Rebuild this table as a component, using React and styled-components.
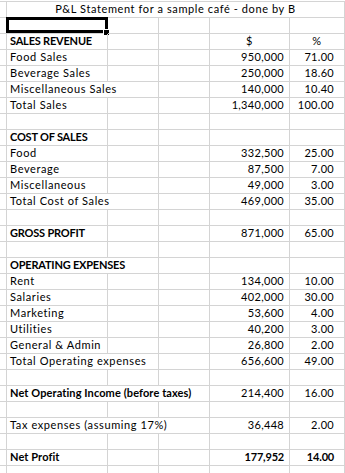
import React from "react";
import styled, { createGlobalStyle } from "styled-components";

const GlobalStyle = createGlobalStyle`
  html, body {
    margin: 0;
    padding: 0;
    background: #ffffff;
    overflow: hidden;
  }
  body {
    font-family: Lato, "Open Sans", sans-serif;
    color: #000000;
  }
`;

const Sheet = styled.div`
  width: 345px;
  margin-top: 1px;
  border-top: 1px solid #d4d4d4;
`;

const Row = styled.div`
  display: grid;
  grid-template-columns: 7px 101px 51px 51px 80px 55px;
  height: 16px;
`;

const Cell = styled.div`
  position: relative;
  grid-column: span ${(p) => p.$span || 1};
  box-sizing: border-box;
  border-right: 1px solid #d4d4d4;
  border-bottom: 1px solid #d4d4d4;
  display: flex;
  align-items: flex-end;
  justify-content: ${(p) =>
    p.$align === "right" ? "flex-end" : p.$align === "center" ? "center" : "flex-start"};
  padding: 0 ${(p) => p.$pr ?? 3}px 1px ${(p) => p.$pl ?? 3}px;
  font-size: 11px;
  line-height: 14px;
  letter-spacing: 0.6px;
  font-weight: 400;
  white-space: nowrap;
`;

const LabelCell = styled(Cell)`
  font-weight: ${(p) => (p.$bold ? 700 : 400)};
  letter-spacing: ${(p) => (p.$heading ? "-0.2px" : p.$bold ? "0.1px" : "0.6px")};
`;

const NumberCell = styled(Cell)`
  justify-content: flex-end;
  font-weight: ${(p) => (p.$bold ? 700 : 400)};
  letter-spacing: ${(p) => (p.$bold ? "-0.2px" : "0.3px")};
`;

const Selection = styled.div`
  position: absolute;
  top: -1px;
  left: -1px;
  right: -1px;
  bottom: 0;
  border: 3px solid #000000;
  box-sizing: border-box;
`;

const Handle = styled.div`
  position: absolute;
  right: -3px;
  bottom: -3px;
  width: 5px;
  height: 5px;
  background: #000000;
  border: 1px solid #ffffff;
`;

const rows = [
  { label: "SALES REVENUE", heading: true, d: "$", e: "%", head: true },
  { label: "Food Sales", d: "950,000", e: "71.00" },
  { label: "Beverage Sales", d: "250,000", e: "18.60" },
  { label: "Miscellaneous Sales", span: 2, d: "140,000", e: "10.40" },
  { label: "Total Sales", d: "1,340,000", e: "100.00" },
  {},
  { label: "COST OF SALES", heading: true },
  { label: "Food", d: "332,500", e: "25.00" },
  { label: "Beverage", d: "87,500", e: "7.00" },
  { label: "Miscellaneous", d: "49,000", e: "3.00" },
  { label: "Total Cost of Sales", span: 2, d: "469,000", e: "35.00" },
  {},
  { label: "GROSS PROFIT", heading: true, d: "871,000", e: "65.00" },
  {},
  { label: "OPERATING EXPENSES", heading: true, span: 2 },
  { label: "Rent", d: "134,000", e: "10.00" },
  { label: "Salaries", d: "402,000", e: "30.00" },
  { label: "Marketing", d: "53,600", e: "4.00" },
  { label: "Utilities", d: "40,200", e: "3.00" },
  { label: "General & Admin", d: "26,800", e: "2.00" },
  { label: "Total Operating expenses", span: 2, d: "656,600", e: "49.00" },
  {},
  { label: "Net Operating Income (before taxes)", bold: true, span: 3, d: "214,400", e: "16.00" },
  {},
  { label: "Tax expenses (assuming 17%)", span: 3, d: "36,448", e: "2.00" },
  {},
  { label: "Net Profit", bold: true, d: "177,952", e: "14.00", boldNums: true },
  {},
];

function DataRow({ r }) {
  const span = r.span || 1;
  const fillers = [];
  for (let i = span; i < 3; i++) fillers.push(<Cell key={i} />);
  return (
    <Row>
      <Cell $pl={0} $pr={0} />
      <LabelCell $span={span} $bold={r.bold || r.heading} $heading={r.heading}>
        {r.label}
      </LabelCell>
      {fillers}
      {r.head ? (
        <>
          <Cell $align="center">{r.d}</Cell>
          <Cell $align="center">{r.e}</Cell>
        </>
      ) : (
        <>
          <NumberCell $pr={5} $bold={r.boldNums}>
            {r.d}
          </NumberCell>
          <NumberCell $pr={10} $bold={r.boldNums}>
            {r.e}
          </NumberCell>
        </>
      )}
    </Row>
  );
}

export default function App() {
  return (
    <>
      <GlobalStyle />
      <Sheet>
        <Row>
          <Cell $pl={0} $pr={0} />
          <Cell $span={5} $align="center">
            P&amp;L Statement for a sample café - done by B
          </Cell>
        </Row>
        <Row>
          <Cell $pl={0} $pr={0} />
          <Cell>
            <Selection />
            <Handle />
          </Cell>
          <Cell />
          <Cell />
          <Cell />
          <Cell />
        </Row>
        {rows.map((r, i) => (
          <DataRow key={i} r={r} />
        ))}
      </Sheet>
    </>
  );
}
